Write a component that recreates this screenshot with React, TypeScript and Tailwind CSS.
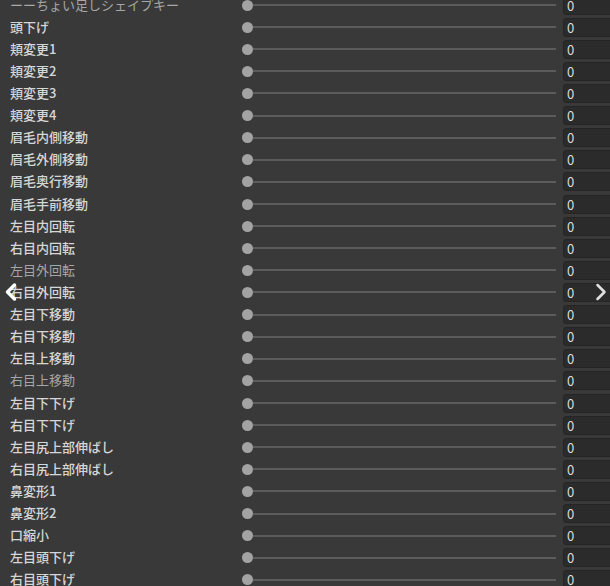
import { ChevronLeft, ChevronRight } from 'lucide-react'

const rows: { label: string; dim?: boolean }[] = [
  { label: 'ーーちょい足しシェイプキー', dim: true },
  { label: '頭下げ' },
  { label: '頬変更1' },
  { label: '頬変更2' },
  { label: '頬変更3' },
  { label: '頬変更4' },
  { label: '眉毛内側移動' },
  { label: '眉毛外側移動' },
  { label: '眉毛奥行移動' },
  { label: '眉毛手前移動' },
  { label: '左目内回転' },
  { label: '右目内回転' },
  { label: '左目外回転', dim: true },
  { label: '右目外回転' },
  { label: '左目下移動' },
  { label: '右目下移動' },
  { label: '左目上移動' },
  { label: '右目上移動', dim: true },
  { label: '左目下下げ' },
  { label: '右目下下げ' },
  { label: '左目尻上部伸ばし' },
  { label: '右目尻上部伸ばし' },
  { label: '鼻変形1' },
  { label: '鼻変形2' },
  { label: '口縮小' },
  { label: '左目頭下げ' },
  { label: '右目頭下げ' },
]

function SliderRow({ label, dim }: { label: string; dim?: boolean }) {
  return (
    <div className="flex items-center h-[22.12px] shrink-0">
      <div
        className={`w-[242px] shrink-0 pl-[10px] text-[13px] leading-none whitespace-nowrap -translate-y-[1px] ${
          dim ? 'text-[#a6a6a6] font-normal' : 'text-[#d6d6d6] font-medium'
        }`}
      >
        {label}
      </div>
      <div className="w-[314px] shrink-0 flex items-center">
        <div className="w-[11px] h-[11px] rounded-full bg-[#a3a3a3] shrink-0" />
        <div className="flex-1 h-[2px] bg-[#5c5c5c]" />
      </div>
      <div className="ml-[7px] w-[60px] h-[19px] shrink-0 rounded-[3px] bg-[#2b2b2b] border border-[#252525] flex items-center pl-[3px] text-[13px] text-[#dcdcdc] leading-none">
        0
      </div>
    </div>
  )
}

export default function App() {
  return (
    <div
      className="relative w-[610px] h-[586px] overflow-hidden bg-[#393939]"
      style={{ fontFamily: '"Noto Sans CJK JP", "Noto Sans", sans-serif' }}
    >
      <div className="flex flex-col -mt-[6px]">
        {rows.map((r) => (
          <SliderRow key={r.label} label={r.label} dim={r.dim} />
        ))}
      </div>
      <ChevronLeft
        className="absolute -left-[3px] top-[278px] text-white"
        size={28}
        strokeWidth={3}
      />
      <ChevronRight
        className="absolute left-[587px] top-[278px] text-[#e0e0e0]"
        size={28}
        strokeWidth={2.2}
      />
    </div>
  )
}
